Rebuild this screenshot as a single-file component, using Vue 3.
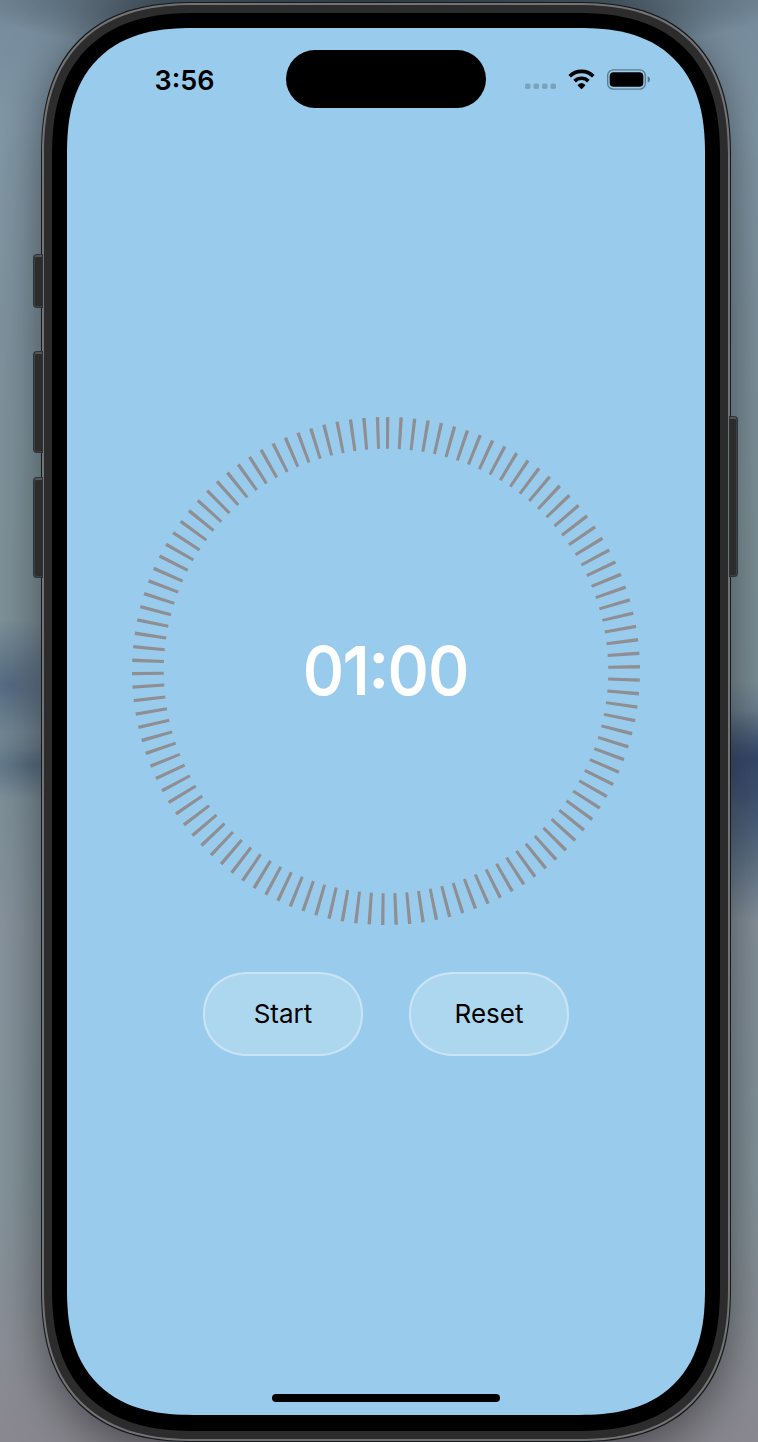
<script setup>
import { computed, onUnmounted, ref } from 'vue'

const DURATION = 60
const remaining = ref(DURATION)
let timer = null

const label = computed(() => {
  const minutes = String(Math.floor(remaining.value / 60)).padStart(2, '0')
  const seconds = String(remaining.value % 60).padStart(2, '0')
  return `${minutes}:${seconds}`
})

function stop() {
  clearInterval(timer)
  timer = null
}

function start() {
  if (timer) return
  timer = setInterval(() => {
    remaining.value -= 1
    if (remaining.value <= 0) stop()
  }, 1000)
}

function reset() {
  stop()
  remaining.value = DURATION
}

onUnmounted(stop)
</script>

<template>
  <div class="desktop">
    <div class="phone">
      <span class="key action"></span>
      <span class="key volume-up"></span>
      <span class="key volume-down"></span>
      <span class="key power"></span>

      <div class="bezel">
        <div class="screen">
          <header class="status">
            <time class="clock">3:56</time>
            <div class="island"></div>
            <div class="indicators">
              <svg class="signal" viewBox="0 0 31 20" aria-hidden="true">
                <rect x="0" y="14.5" width="5.5" height="5.5" rx="1.7" />
                <rect x="8.5" y="14.5" width="5.5" height="5.5" rx="1.7" />
                <rect x="17" y="14.5" width="5.5" height="5.5" rx="1.7" />
                <rect x="25.5" y="14.5" width="5.5" height="5.5" rx="1.7" />
              </svg>
              <svg class="wifi" viewBox="0 0 81 61" aria-hidden="true">
                <path class="arc" d="M4.500 22A51 51 0 0 1 76.500 22" />
                <path class="arc" d="M19.500 37A29.500 29.500 0 0 1 61.500 37" />
                <path d="M29.500 48Q40.500 38 51.500 48Q53 49.500 51.500 51L42.500 60Q40.500 61.500 38.500 60L29.500 51Q28 49.500 29.500 48Z" />
              </svg>
              <svg class="battery" viewBox="0 0 129 62" aria-hidden="true">
                <rect class="shell" x="2" y="2" width="113" height="58" rx="17" />
                <rect x="8" y="9" width="101" height="44" rx="12" />
                <path class="nub" d="M122 21Q129 24 129 31T122 41Z" />
              </svg>
            </div>
          </header>

          <main class="timer">
            <div class="dial">
              <svg class="ring" viewBox="0 0 320 320" aria-hidden="true">
                <circle cx="160" cy="160" r="150" transform="rotate(-90 160 160)" />
              </svg>
              <div class="remaining" role="timer">{{ label }}</div>
            </div>
            <div class="controls">
              <button type="button" @click="start">Start</button>
              <button type="button" @click="reset">Reset</button>
            </div>
          </main>

          <footer class="home">
            <span class="home-bar"></span>
          </footer>
        </div>
      </div>
    </div>
  </div>
</template>

<style>
body {
  margin: 0;
}
</style>

<style scoped>
.desktop {
  box-sizing: border-box;
  display: flex;
  min-height: 100vh;
  padding: 3px 28px 1px 42px;
  overflow: hidden;
  font-family: Inter, "Liberation Sans", sans-serif;
  background:
    radial-gradient(ellipse 54% 60px at 50% 0, rgba(30, 40, 46, 0.7) 0%, rgba(30, 40, 46, 0.5) 55%, transparent 100%),
    radial-gradient(ellipse 90px 66px at 10px 685px, rgba(72, 96, 126, 0.75) 0%, transparent 100%),
    radial-gradient(ellipse 80px 34px at 30px 765px, rgba(80, 104, 128, 0.8) 0%, transparent 100%),
    radial-gradient(ellipse 110px 50px at 100% 760px, rgba(44, 66, 102, 0.8) 0%, transparent 100%),
    radial-gradient(ellipse 110px 120px at 100% 800px, rgba(64, 84, 116, 0.9) 10%, transparent 100%),
    linear-gradient(180deg, #74899a 0%, #8298a7 9%, #7f939f 22%, #7e9299 38%, #7d9099 55%, #87939d 64%, #84949b 82%, #8b8f97 93%, #89878f 100%);
}

.phone {
  position: relative;
  flex: 1;
  display: flex;
  box-sizing: border-box;
  padding: 8px;
  border: 2px solid #737373;
  border-radius: 125px;
  background: #2c2c2c;
  box-shadow:
    0 0 0 1px #151a1e,
    0 12px 50px rgba(0, 0, 0, 0.5);
}

.key {
  position: absolute;
  box-sizing: border-box;
  width: 8px;
  border: 1px solid #3c4043;
  border-top: 2px solid #555;
  background: #2c2c2c;
  box-shadow: 0 0 0 1px #2b343a;
}

.action,
.volume-up,
.volume-down {
  right: 100%;
  margin-right: 2px;
  border-right: 0;
  border-radius: 3px 0 0 3px;
}

.action {
  top: 250px;
  height: 52px;
}

.volume-up {
  top: 347px;
  height: 100px;
}

.volume-down {
  top: 473px;
  height: 99px;
}

.power {
  top: 412px;
  left: 100%;
  width: 7px;
  height: 159px;
  margin-left: 2px;
  border-left: 0;
  border-radius: 0 3px 3px 0;
}

.bezel {
  flex: 1;
  display: flex;
  padding: 15px 15px 16px;
  border-radius: 115px;
  background: #000;
}

.screen {
  flex: 1;
  display: flex;
  flex-direction: column;
  border-radius: 100px;
  background: #99ccec;
}

.status {
  display: grid;
  grid-template-columns: 1fr 200px 1fr;
  align-items: center;
  padding-top: 22px;
  padding-bottom: 19px;
}

.clock {
  padding-top: 3px;
  padding-left: 16px;
  font-size: 27px;
  font-weight: 600;
  line-height: 32px;
  text-align: center;
  color: #000;
}

.island {
  height: 58px;
  border-radius: 29px;
  background: #000;
}

.indicators {
  display: flex;
  align-items: center;
  justify-content: center;
  gap: 12px;
  padding-right: 17px;
}

.signal {
  width: 31px;
  height: 20px;
  opacity: 0.2;
}

.wifi {
  width: 27px;
  height: 20px;
}

.arc {
  fill: none;
  stroke: #000;
  stroke-width: 11;
}

.battery {
  width: 43px;
  height: 21px;
}

.shell {
  fill: none;
  stroke: #000;
  stroke-width: 4;
  opacity: 0.4;
}

.nub {
  opacity: 0.45;
}

.timer {
  flex: 1;
  display: flex;
  flex-direction: column;
  align-items: center;
  justify-content: center;
  gap: 47px;
  padding: 0 65px;
}

.dial {
  display: grid;
  place-items: center;
  width: 100%;
  max-width: 508px;
}

.dial > * {
  grid-area: 1 / 1;
}

.ring {
  display: block;
  width: 100%;
}

.ring circle {
  fill: none;
  stroke: #8e8e93;
  stroke-width: 20;
  stroke-dasharray: 2 6;
}

.remaining {
  font-size: 64px;
  font-weight: 400;
  line-height: 76px;
  color: #fff;
  -webkit-text-stroke: 2px #fff;
  stroke-linejoin: round;
}

.controls {
  display: flex;
  gap: 46px;
}

button {
  width: 160px;
  height: 84px;
  padding: 0;
  border: 2px solid rgba(255, 255, 255, 0.35);
  border-radius: 42px;
  background: rgba(255, 255, 255, 0.2);
  font-family: inherit;
  font-size: 26px;
  line-height: 32px;
  color: #000;
  cursor: pointer;
}

.home {
  display: flex;
  align-items: flex-end;
  justify-content: center;
  height: 56px;
  padding-bottom: 13px;
}

.home-bar {
  width: 228px;
  height: 8px;
  border-radius: 4px;
  background: #000;
}

@supports (corner-shape: superellipse(1.3)) {
  .phone,
  .bezel,
  .screen {
    corner-shape: superellipse(1.3);
  }

  .phone {
    border-radius: 154px;
  }

  .bezel {
    border-radius: 144px;
  }

  .screen {
    border-radius: 126px;
  }

  button {
    border-radius: 46px / 42px;
    corner-shape: superellipse(1.1);
  }
}
</style>
